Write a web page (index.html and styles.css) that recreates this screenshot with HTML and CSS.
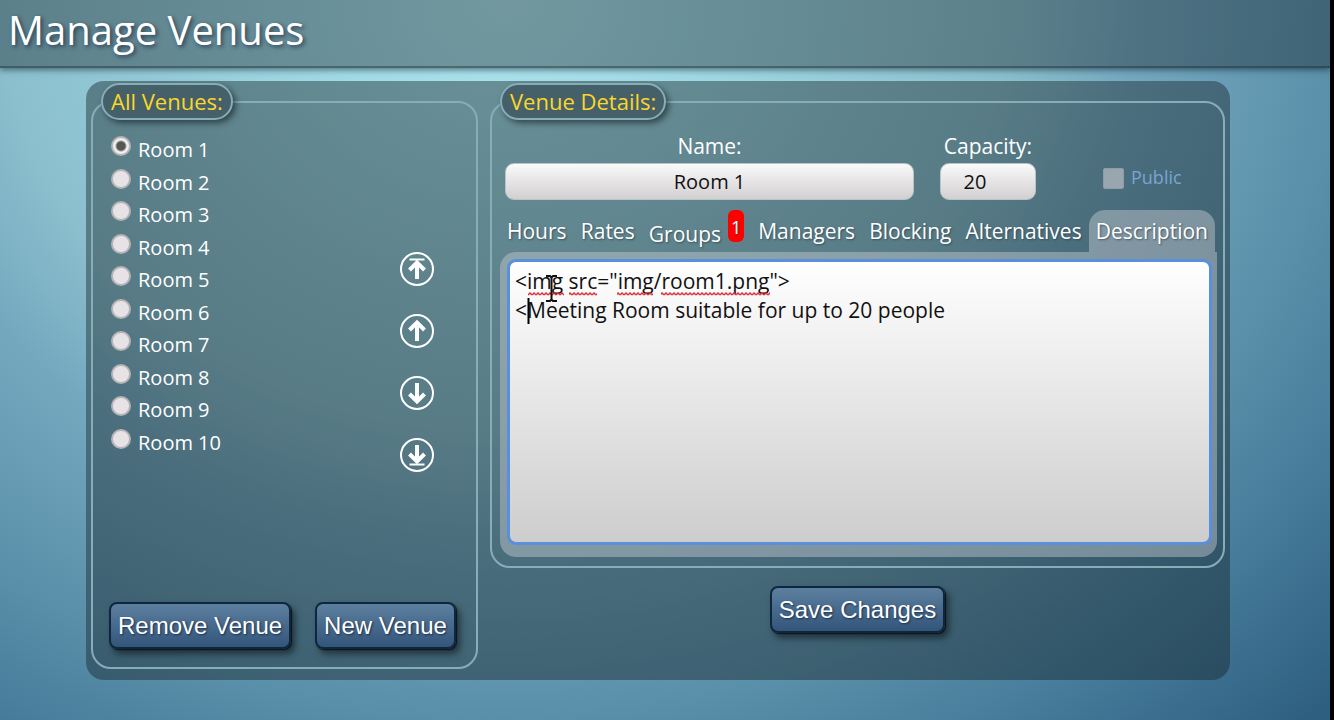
FILE: index.html
```html
<!DOCTYPE html>
<html lang="en">
<head>
  <meta charset="UTF-8">
  <meta name="viewport" content="width=device-width, initial-scale=1.0">
  <title>Manage Venues</title>
  <link rel="stylesheet" href="styles.css">
</head>
<body>

  <header class="topbar">
    <h1>Manage Venues</h1>
  </header>

  <main class="manager">
    <fieldset class="box">
      <legend>All Venues:</legend>
      <div class="venues">
        <div class="venue-list">
          <label><input type="radio" name="venue" checked> Room 1</label>
          <label><input type="radio" name="venue"> Room 2</label>
          <label><input type="radio" name="venue"> Room 3</label>
          <label><input type="radio" name="venue"> Room 4</label>
          <label><input type="radio" name="venue"> Room 5</label>
          <label><input type="radio" name="venue"> Room 6</label>
          <label><input type="radio" name="venue"> Room 7</label>
          <label><input type="radio" name="venue"> Room 8</label>
          <label><input type="radio" name="venue"> Room 9</label>
          <label><input type="radio" name="venue"> Room 10</label>
        </div>
        <div class="order">
          <button type="button" aria-label="Move to top">
            <svg viewBox="0 0 36 36"><circle cx="18" cy="18" r="16"/><path class="bar" d="M10.500 8.500h15"/><path d="M18 28V12M10.500 19l7.500-7.500 7.500 7.500"/></svg>
          </button>
          <button type="button" aria-label="Move up">
            <svg viewBox="0 0 36 36"><circle cx="18" cy="18" r="16"/><path d="M18 28V10M10.500 17l7.500-7.500 7.500 7.500"/></svg>
          </button>
          <button type="button" aria-label="Move down">
            <svg viewBox="0 0 36 36"><circle cx="18" cy="18" r="16"/><path d="M18 8v18M10.500 19l7.500 7.500 7.500-7.500"/></svg>
          </button>
          <button type="button" aria-label="Move to bottom">
            <svg viewBox="0 0 36 36"><circle cx="18" cy="18" r="16"/><path class="bar" d="M10.500 27.500h15"/><path d="M18 8v16M10.500 17l7.500 7.500 7.500-7.500"/></svg>
          </button>
        </div>
      </div>
      <div class="actions">
        <button type="button" class="btn">Remove Venue</button>
        <button type="button" class="btn">New Venue</button>
      </div>
    </fieldset>

    <div class="details">
      <fieldset class="box">
        <legend>Venue Details:</legend>
        <div class="fields">
          <div class="field name">
            <label for="name">Name:</label>
            <input type="text" id="name" value="Room 1">
          </div>
          <div class="field capacity">
            <label for="capacity">Capacity:</label>
            <input type="number" id="capacity" value="20">
          </div>
          <label class="public"><input type="checkbox" disabled> Public</label>
        </div>

        <nav class="tabs">
          <a href="#hours">Hours</a>
          <a href="#rates">Rates</a>
          <a href="#groups" class="has-count">Groups <span class="count">1</span></a>
          <a href="#managers">Managers</a>
          <a href="#blocking">Blocking</a>
          <a href="#alternatives">Alternatives</a>
          <a href="#description" class="active">Description</a>
        </nav>

        <div class="tab-body" id="description">
          <textarea aria-label="Description" spellcheck="false">&lt;img src="img/room1.png"&gt;
&lt;Meeting Room suitable for up to 20 people</textarea>
          <!-- spelling marks, caret and mouse pointer -->
          <svg class="marks" viewBox="0 0 300 70" aria-hidden="true">
            <defs>
              <pattern id="wave" width="4" height="4" patternUnits="userSpaceOnUse">
                <path d="M0 3L2 1L4 3" fill="none" stroke="#e0303a" stroke-width="1.500"/>
              </pattern>
            </defs>
            <rect x="20" y="32" width="36" height="4" fill="url(#wave)"/>
            <rect x="61" y="32" width="28" height="4" fill="url(#wave)"/>
            <rect x="109" y="32" width="36" height="4" fill="url(#wave)"/>
            <rect x="153" y="32" width="109" height="4" fill="url(#wave)"/>
            <path d="M20.500 38v26" stroke="#000" stroke-width="2"/>
            <path d="M38 16h4l1.500 1.500L45 16h4M43.500 17v23M38 41h4l1.500-1.500L45 41h4" fill="none" stroke="#111" stroke-width="2"/>
          </svg>
        </div>
      </fieldset>
      <button type="button" class="btn save">Save Changes</button>
    </div>
  </main>

</body>
</html>
```

FILE: styles.css
```css
* {
  box-sizing: border-box;
}

html {
  background: #000;
}

body {
  margin: 0 4px 0 0;
  min-height: 100vh;
  font-family: "Open Sans", "Noto Sans", sans-serif;
  font-size: 21px;
  color: #fff;
  background: radial-gradient(ellipse 1400px 1200px at 38% 0, #b0e6ef 0%, #a2dbe6 12%, #8bbfcd 36%, #74a8bf 45%, #5a8fa9 60%, #4a7f9d 68%, #2e5f80 83%);
}

.topbar {
  height: 68px;
  padding: 0 8px;
  background: rgba(22, 34, 40, 0.4);
  border-bottom: 2px solid rgba(20, 40, 50, 0.4);
  box-shadow: 0 2px 6px rgba(0, 20, 30, 0.5);
}

h1 {
  margin: 0;
  font-size: 40px;
  font-weight: normal;
  line-height: 60px;
  text-shadow: 2px 2px 4px rgba(20, 30, 60, 0.7);
}

.manager {
  display: grid;
  grid-template-columns: minmax(0, 387fr) minmax(0, 735fr);
  gap: 12px;
  margin: 13px 100px 0 86px;
  padding: 2px 5px 11px;
  border-radius: 18px;
  background: rgba(22, 34, 40, 0.43);
}

.box {
  min-width: 0;
  margin: 0;
  padding: 0 8px;
  border: 2px solid #86aeb8;
  border-radius: 20px;
}

.details .box {
  padding: 0 6px 0 8px;
}

legend {
  padding: 0 8px;
  border: 2px solid #86aeb8;
  border-radius: 20px;
  background: #456069;
  color: #fbd72b;
  font-size: 22px;
  line-height: 33px;
  box-shadow: 3px 3px 6px rgba(0, 0, 0, 0.5);
}

.venues {
  display: flex;
  justify-content: space-between;
  padding: 14px 33px 0 10px;
}

.venue-list {
  display: grid;
  grid-auto-rows: 1fr;
  height: 325px;
  font-size: 20px;
}

.venue-list label {
  display: flex;
  gap: 7px;
  line-height: 32px;
}

.venue-list input {
  appearance: none;
  width: 20px;
  height: 20px;
  margin: 2px 0 0;
  border: 2px solid #b5b3b5;
  border-radius: 50%;
  background: #e6e2e5;
}

.venue-list input:checked {
  background: radial-gradient(circle, #555 0 4px, #eee 6px);
}

.order {
  display: flex;
  flex-direction: column;
  gap: 26px;
  padding-top: 117px;
}

.order button {
  width: 36px;
  height: 36px;
  padding: 0;
  border: 0;
  background: none;
}

.order svg {
  display: block;
  fill: none;
  stroke: #fff;
  stroke-width: 4;
}

.order circle,
.order .bar {
  stroke-width: 2;
}

.actions {
  display: flex;
  gap: 24px;
  margin-top: 129px;
  padding: 0 8px 18px;
}

.btn {
  height: 47px;
  padding: 0 7px;
  border: 2px solid #10263c;
  border-radius: 8px;
  background: linear-gradient(#5d7f9f, #32557a);
  color: #fff;
  font: 24px "Liberation Sans", Arial, sans-serif;
  white-space: nowrap;
  text-shadow: 1px 1px 2px #1b304c;
  box-shadow: 1px 1px 1px #0a1420, 4px 5px 7px rgba(0, 0, 0, 0.5);
}

.save {
  display: block;
  margin: 18px auto 0;
}

.fields {
  display: flex;
  padding: 13px 24px 0 5px;
}

.field {
  display: flex;
  flex-direction: column;
  text-align: center;
  line-height: 26px;
}

.name {
  flex: 1;
}

.capacity {
  width: 96px;
  margin: 0 67px 0 26px;
}

.field input {
  width: 100%;
  height: 37px;
  margin-top: 4px;
  border: 1px solid #b9c4c8;
  border-radius: 9px;
  background: linear-gradient(#fafafa, #d2cfd1);
  color: #111;
  font: inherit;
  font-size: 20px;
  text-align: center;
}

.field input[type="number"] {
  appearance: textfield;
  padding: 0 26px 0 0;
}

.field input::-webkit-inner-spin-button {
  display: none;
}

.public {
  display: flex;
  gap: 7px;
  width: 90px;
  margin-top: 33px;
  color: #78a5d4;
  font-size: 18px;
  line-height: 22px;
}

.public input {
  appearance: none;
  width: 21px;
  height: 21px;
  margin: 2px 0 0;
  border: 1px solid #8d9ca5;
  border-radius: 2px;
  background: #9aa6ad;
}

.tabs {
  display: flex;
  justify-content: space-between;
  margin: 10px 2px 0 0;
}

.tabs a {
  padding: 0 7px;
  border-radius: 16px 16px 0 0;
  color: #fff;
  line-height: 42px;
  text-decoration: none;
  text-shadow: 1px 1px 2px rgba(30, 50, 60, 0.6);
}

.tabs .active {
  background: rgba(200, 205, 210, 0.45);
}

.tabs .has-count {
  display: flex;
  gap: 7px;
  line-height: 48px;
  height: 42px;
}

.count {
  width: 16px;
  height: 32px;
  border-radius: 6px;
  background: #f00;
  font-size: 18px;
  line-height: 34px;
  text-align: center;
}

.tab-body {
  position: relative;
  margin-bottom: 9px;
  padding: 7px 5px 12px 7px;
  border-radius: 16px 0 16px 16px;
  background: rgba(200, 205, 210, 0.45);
}

textarea {
  display: block;
  width: 100%;
  height: 286px;
  padding: 5px;
  border: 3px solid #5a8fdc;
  border-radius: 9px;
  outline: 0;
  background: linear-gradient(#fff, #cdcdcd);
  color: #111;
  font: inherit;
  line-height: 29px;
  resize: none;
}

.marks {
  position: absolute;
  top: 8px;
  left: 8px;
  width: 300px;
  height: 70px;
  pointer-events: none;
}
```
